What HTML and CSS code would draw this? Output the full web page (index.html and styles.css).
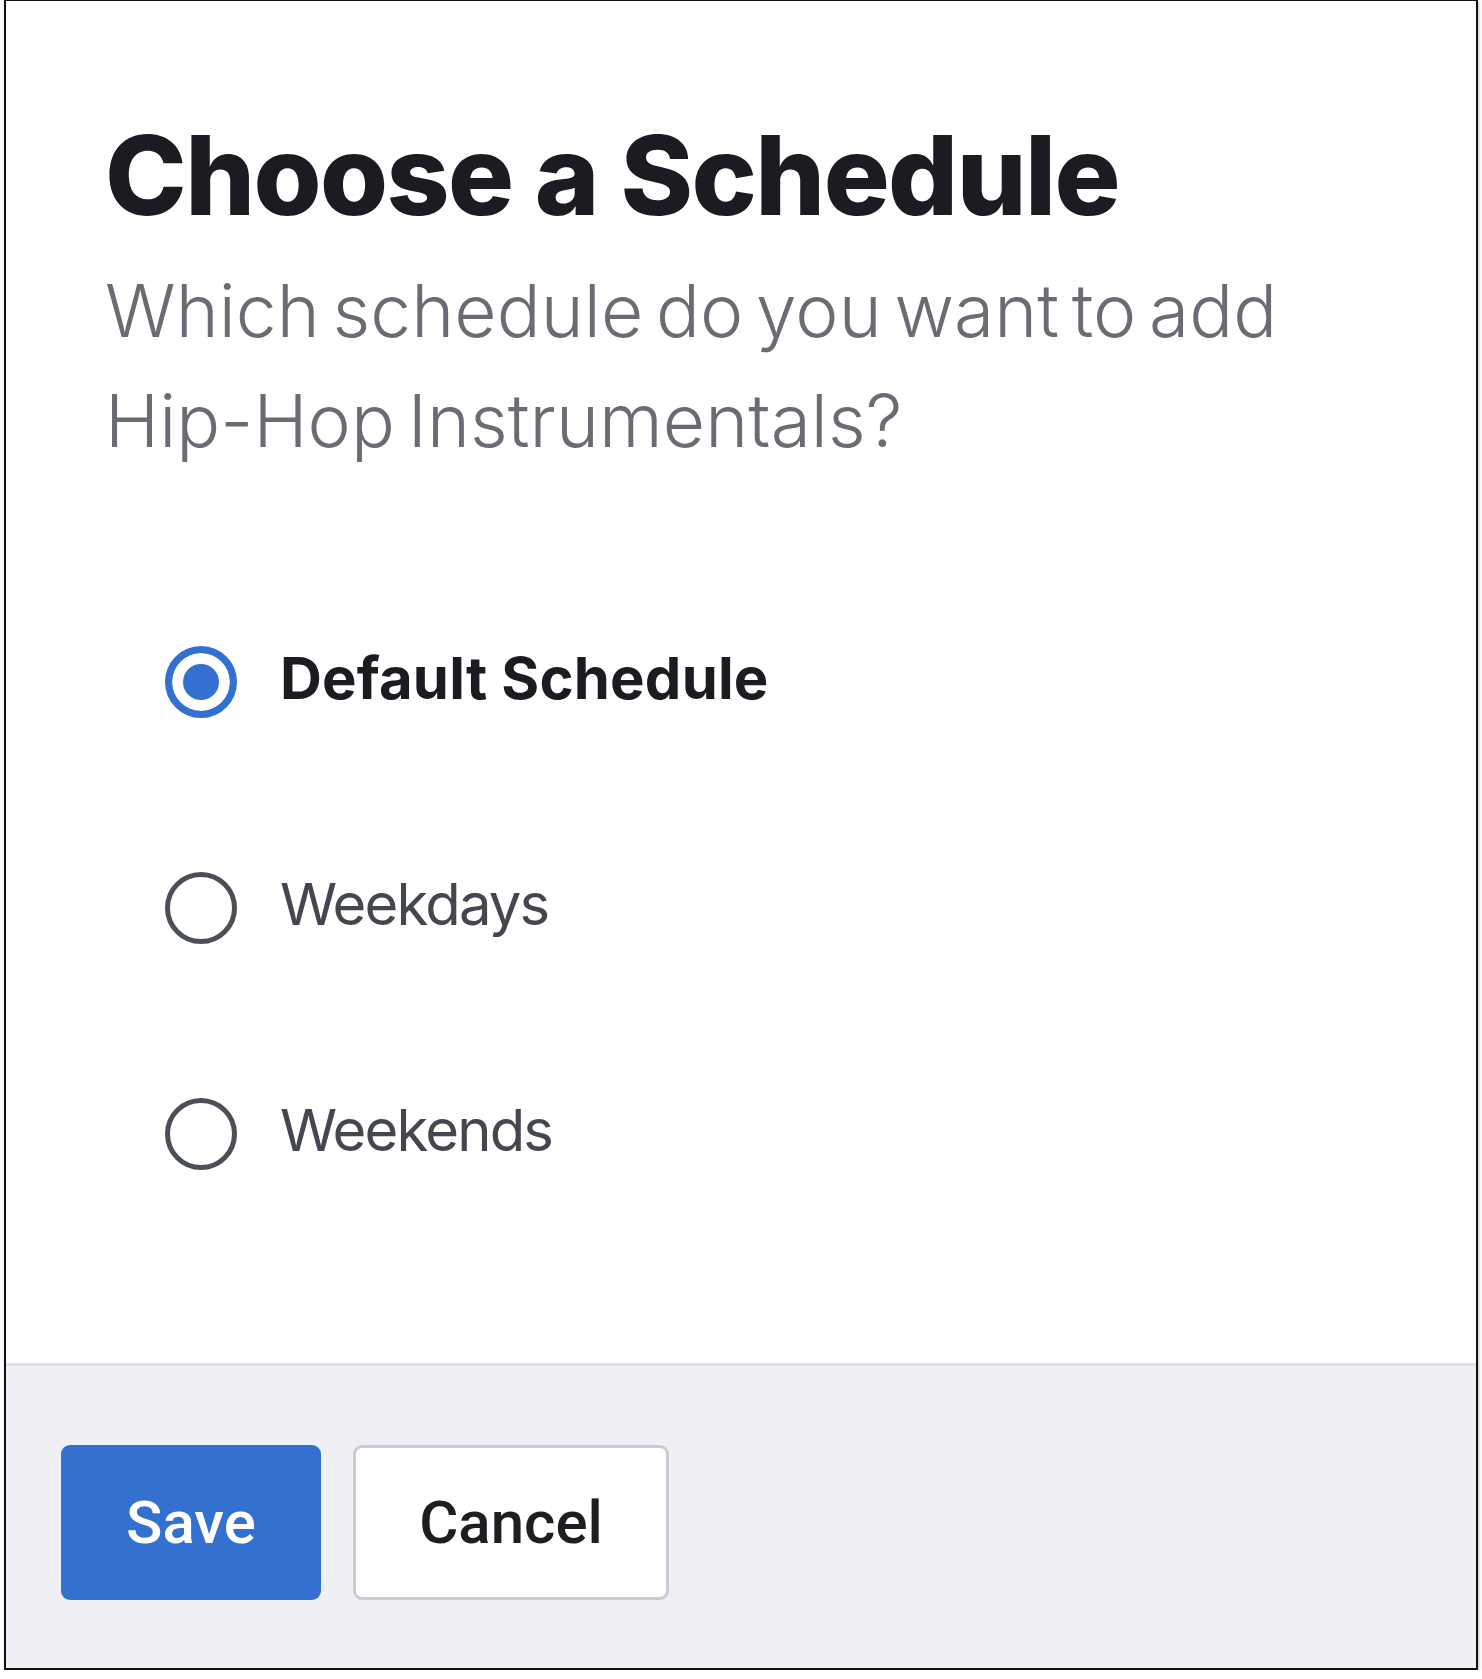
FILE: index.html
```html
<!DOCTYPE html>
<html lang="en">
<head>
  <meta charset="UTF-8" />
  <meta name="viewport" content="width=device-width, initial-scale=1.0"/>
  <title>Choose a Schedule</title>
  <link rel="stylesheet" href="styles.css">
</head>
<body>
  <div class="dialog">
    <div class="dialog-body">
      <h1>Choose a Schedule</h1>
      <p class="lead">Which schedule do you want to add Hip-Hop Instrumentals?</p>

      <form class="options" id="scheduleForm">
        <label class="option">
          <input type="radio" name="schedule" value="default" checked />
          <span class="dot"></span>
          <span class="text">Default Schedule</span>
        </label>
        <label class="option">
          <input type="radio" name="schedule" value="weekdays" />
          <span class="dot"></span>
          <span class="text">Weekdays</span>
        </label>
        <label class="option">
          <input type="radio" name="schedule" value="weekends" />
          <span class="dot"></span>
          <span class="text">Weekends</span>
        </label>
      </form>
    </div>

    <div class="dialog-footer">
      <button type="submit" form="scheduleForm" class="btn btn-primary">Save</button>
      <button type="button" class="btn btn-secondary">Cancel</button>
    </div>
  </div>
</body>
</html>
```

FILE: styles.css
```css
body {
  margin: 0;
  background-color: #fff;
  font-family: Inter, 'Noto Sans', sans-serif;
}
.dialog {
  margin-left: 4px;
  width: 1474px;
  height: 1670px;
  box-sizing: border-box;
  border: 2px solid #111;
  border-top-width: 1px;
  display: flex;
  flex-direction: column;
  background-color: #fff;
  box-shadow: 1px 1px 3px rgba(0, 0, 0, 0.25);
}
.dialog-body {
  flex: 1;
  padding: 108px 100px 0 99px;
}
h1 {
  margin: 0;
  font-size: 110px;
  line-height: 132px;
  font-weight: 800;
  letter-spacing: -1.6px;
  color: #1b1c21;
}
.lead {
  margin: 15px 0 0;
  max-width: 1200px;
  font-size: 73px;
  line-height: 110px;
  font-weight: 300;
  letter-spacing: 0.1px;
  word-spacing: -8px;
  color: #6a6c73;
}
.options {
  display: flex;
  flex-direction: column;
  gap: 154px;
  margin-top: 170px;
  padding-left: 60px;
}
.option {
  display: flex;
  align-items: center;
  gap: 43px;
  height: 72px;
  cursor: pointer;
}
.option input {
  display: none;
}
.dot {
  width: 72px;
  height: 72px;
  box-sizing: border-box;
  border: 5px solid #4b4f58;
  border-radius: 50%;
  flex-shrink: 0;
}
.option input:checked + .dot {
  border: 7px solid #3370d1;
  box-shadow: inset 0 0 0 11px #fff;
  background-color: #3370d1;
}
.text {
  font-size: 58px;
  font-weight: 400;
  letter-spacing: -1.8px;
  color: #44474f;
  padding-bottom: 8px;
}
.option input:checked ~ .text {
  font-weight: 700;
  letter-spacing: 0.2px;
  color: #1b1c21;
}
.dialog-footer {
  display: flex;
  gap: 32px;
  padding: 79px 55px 68px;
  background-color: #eef0f5;
  border-top: 3px solid #e0e2e8;
}
.btn {
  height: 155px;
  font-family: Roboto, 'Liberation Sans', sans-serif;
  font-size: 60px;
  font-weight: 500;
  border-radius: 9px;
  cursor: pointer;
}
.btn-primary {
  width: 260px;
  background-color: #3370d0;
  color: #fff;
  border: none;
}
.btn-secondary {
  width: 316px;
  background-color: #fff;
  color: #1d1e22;
  border: 3px solid #c9ccd3;
}
```
